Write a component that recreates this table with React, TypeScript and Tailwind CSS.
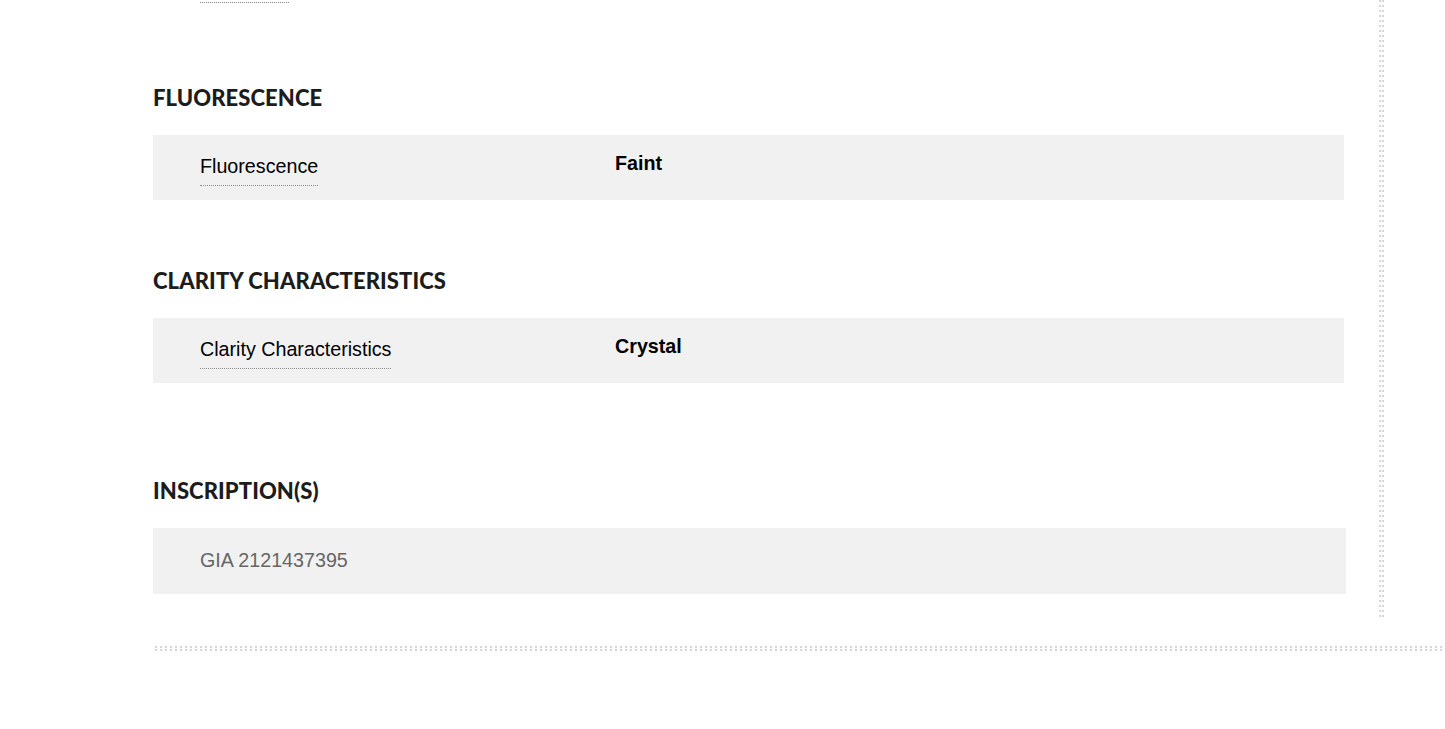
import React from "react";

const headingCls =
  "text-[22px] leading-[24px] font-black uppercase tracking-[0.1px] text-[#1c1c1c] [font-family:Lato,'Open_Sans',sans-serif]";
const bodyFont = "[font-family:'Liberation_Sans',Arial,sans-serif]";

function Row({ label, value }: { label: string; value: string }) {
  return (
    <div className={`flex h-[65px] w-[1191px] bg-[#f1f1f1] pl-[47px] ${bodyFont}`}>
      <div className="w-[415px] pt-[20px]">
        <span className="inline-block border-b border-dotted border-[#8a8a8a] pb-[7px] text-[19.7px] leading-[23px] text-black">
          {label}
        </span>
      </div>
      <div className="pt-[17px] text-[19.7px] font-bold leading-[23px] text-black">{value}</div>
    </div>
  );
}

export default function App() {
  return (
    <div className="h-[729px] w-full overflow-hidden bg-white">
      <div className="flex pl-[153px]">
        <div className="flex w-[1226px] flex-col pb-[26px]">
          <div className="ml-[47px] h-[3px] w-[89px] border-b border-dotted border-[#8a8a8a]" />
          <h2 className={`mt-[83px] ${headingCls}`}>Fluorescence</h2>
          <div className="mt-[25px]">
            <Row label="Fluorescence" value="Faint" />
          </div>
          <h2 className={`mt-[69px] ${headingCls}`}>Clarity Characteristics</h2>
          <div className="mt-[25px]">
            <Row label="Clarity Characteristics" value="Crystal" />
          </div>
          <h2 className={`mt-[96px] ${headingCls}`}>Inscription(s)</h2>
          <div
            className={`mt-[25px] h-[66px] w-[1193px] bg-[#f1f1f1] pl-[47px] pt-[21px] text-[19.7px] leading-[23px] text-[#666666] ${bodyFont}`}
          >
            GIA 2121437395
          </div>
        </div>
        <div className="w-[5px] bg-[linear-gradient(to_right,transparent_2px,#ffffff_2px,#ffffff_3px,transparent_3px),linear-gradient(#d6d6d6_2px,transparent_2px)] bg-[length:100%_100%,100%_5px]" />
      </div>
      <div className="ml-[155px] mt-[26px] h-[5px] bg-[linear-gradient(transparent_2px,#ffffff_2px,#ffffff_3px,transparent_3px),linear-gradient(to_right,#d6d6d6_2px,transparent_2px)] bg-[length:100%_100%,5px_100%]" />
    </div>
  );
}
